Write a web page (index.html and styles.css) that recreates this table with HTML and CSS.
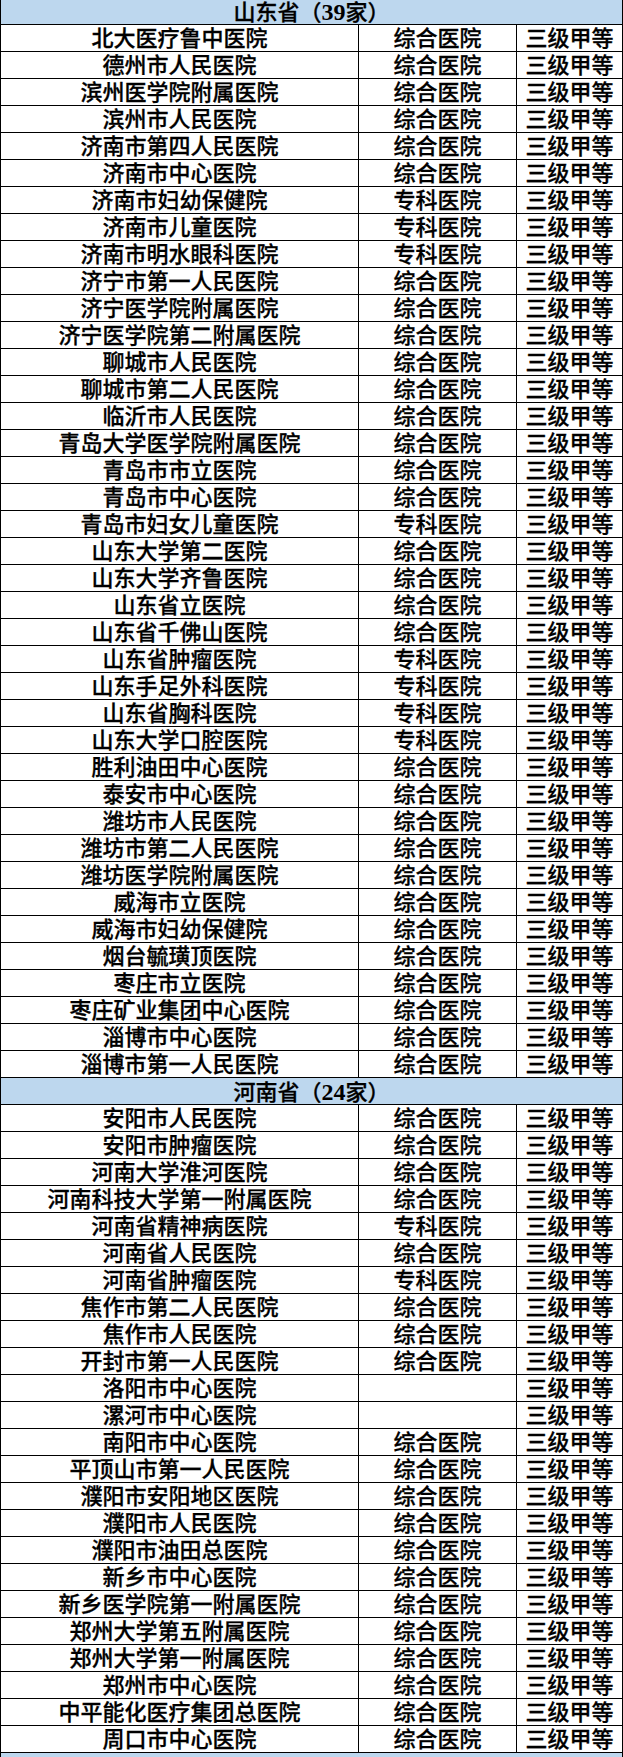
FILE: index.html
```html
<!DOCTYPE html>
<html lang="zh-CN">
<head>
<meta charset="utf-8">
<title>医院名单</title>
<link rel="stylesheet" href="styles.css">
</head>
<body>
<div class="sheet">
  <div class="group">山东省（<span class="num">39</span>家）</div>
  <div class="row"><div class="cell">北大医疗鲁中医院</div><div class="cell">综合医院</div><div class="cell">三级甲等</div></div>
  <div class="row"><div class="cell">德州市人民医院</div><div class="cell">综合医院</div><div class="cell">三级甲等</div></div>
  <div class="row"><div class="cell">滨州医学院附属医院</div><div class="cell">综合医院</div><div class="cell">三级甲等</div></div>
  <div class="row"><div class="cell">滨州市人民医院</div><div class="cell">综合医院</div><div class="cell">三级甲等</div></div>
  <div class="row"><div class="cell">济南市第四人民医院</div><div class="cell">综合医院</div><div class="cell">三级甲等</div></div>
  <div class="row"><div class="cell">济南市中心医院</div><div class="cell">综合医院</div><div class="cell">三级甲等</div></div>
  <div class="row"><div class="cell">济南市妇幼保健院</div><div class="cell">专科医院</div><div class="cell">三级甲等</div></div>
  <div class="row"><div class="cell">济南市儿童医院</div><div class="cell">专科医院</div><div class="cell">三级甲等</div></div>
  <div class="row"><div class="cell">济南市明水眼科医院</div><div class="cell">专科医院</div><div class="cell">三级甲等</div></div>
  <div class="row"><div class="cell">济宁市第一人民医院</div><div class="cell">综合医院</div><div class="cell">三级甲等</div></div>
  <div class="row"><div class="cell">济宁医学院附属医院</div><div class="cell">综合医院</div><div class="cell">三级甲等</div></div>
  <div class="row"><div class="cell">济宁医学院第二附属医院</div><div class="cell">综合医院</div><div class="cell">三级甲等</div></div>
  <div class="row"><div class="cell">聊城市人民医院</div><div class="cell">综合医院</div><div class="cell">三级甲等</div></div>
  <div class="row"><div class="cell">聊城市第二人民医院</div><div class="cell">综合医院</div><div class="cell">三级甲等</div></div>
  <div class="row"><div class="cell">临沂市人民医院</div><div class="cell">综合医院</div><div class="cell">三级甲等</div></div>
  <div class="row"><div class="cell">青岛大学医学院附属医院</div><div class="cell">综合医院</div><div class="cell">三级甲等</div></div>
  <div class="row"><div class="cell">青岛市市立医院</div><div class="cell">综合医院</div><div class="cell">三级甲等</div></div>
  <div class="row"><div class="cell">青岛市中心医院</div><div class="cell">综合医院</div><div class="cell">三级甲等</div></div>
  <div class="row"><div class="cell">青岛市妇女儿童医院</div><div class="cell">专科医院</div><div class="cell">三级甲等</div></div>
  <div class="row"><div class="cell">山东大学第二医院</div><div class="cell">综合医院</div><div class="cell">三级甲等</div></div>
  <div class="row"><div class="cell">山东大学齐鲁医院</div><div class="cell">综合医院</div><div class="cell">三级甲等</div></div>
  <div class="row"><div class="cell">山东省立医院</div><div class="cell">综合医院</div><div class="cell">三级甲等</div></div>
  <div class="row"><div class="cell">山东省千佛山医院</div><div class="cell">综合医院</div><div class="cell">三级甲等</div></div>
  <div class="row"><div class="cell">山东省肿瘤医院</div><div class="cell">专科医院</div><div class="cell">三级甲等</div></div>
  <div class="row"><div class="cell">山东手足外科医院</div><div class="cell">专科医院</div><div class="cell">三级甲等</div></div>
  <div class="row"><div class="cell">山东省胸科医院</div><div class="cell">专科医院</div><div class="cell">三级甲等</div></div>
  <div class="row"><div class="cell">山东大学口腔医院</div><div class="cell">专科医院</div><div class="cell">三级甲等</div></div>
  <div class="row"><div class="cell">胜利油田中心医院</div><div class="cell">综合医院</div><div class="cell">三级甲等</div></div>
  <div class="row"><div class="cell">泰安市中心医院</div><div class="cell">综合医院</div><div class="cell">三级甲等</div></div>
  <div class="row"><div class="cell">潍坊市人民医院</div><div class="cell">综合医院</div><div class="cell">三级甲等</div></div>
  <div class="row"><div class="cell">潍坊市第二人民医院</div><div class="cell">综合医院</div><div class="cell">三级甲等</div></div>
  <div class="row"><div class="cell">潍坊医学院附属医院</div><div class="cell">综合医院</div><div class="cell">三级甲等</div></div>
  <div class="row"><div class="cell">威海市立医院</div><div class="cell">综合医院</div><div class="cell">三级甲等</div></div>
  <div class="row"><div class="cell">威海市妇幼保健院</div><div class="cell">综合医院</div><div class="cell">三级甲等</div></div>
  <div class="row"><div class="cell">烟台毓璜顶医院</div><div class="cell">综合医院</div><div class="cell">三级甲等</div></div>
  <div class="row"><div class="cell">枣庄市立医院</div><div class="cell">综合医院</div><div class="cell">三级甲等</div></div>
  <div class="row"><div class="cell">枣庄矿业集团中心医院</div><div class="cell">综合医院</div><div class="cell">三级甲等</div></div>
  <div class="row"><div class="cell">淄博市中心医院</div><div class="cell">综合医院</div><div class="cell">三级甲等</div></div>
  <div class="row"><div class="cell">淄博市第一人民医院</div><div class="cell">综合医院</div><div class="cell">三级甲等</div></div>
  <div class="group">河南省（<span class="num">24</span>家）</div>
  <div class="row"><div class="cell">安阳市人民医院</div><div class="cell">综合医院</div><div class="cell">三级甲等</div></div>
  <div class="row"><div class="cell">安阳市肿瘤医院</div><div class="cell">综合医院</div><div class="cell">三级甲等</div></div>
  <div class="row"><div class="cell">河南大学淮河医院</div><div class="cell">综合医院</div><div class="cell">三级甲等</div></div>
  <div class="row"><div class="cell">河南科技大学第一附属医院</div><div class="cell">综合医院</div><div class="cell">三级甲等</div></div>
  <div class="row"><div class="cell">河南省精神病医院</div><div class="cell">专科医院</div><div class="cell">三级甲等</div></div>
  <div class="row"><div class="cell">河南省人民医院</div><div class="cell">综合医院</div><div class="cell">三级甲等</div></div>
  <div class="row"><div class="cell">河南省肿瘤医院</div><div class="cell">专科医院</div><div class="cell">三级甲等</div></div>
  <div class="row"><div class="cell">焦作市第二人民医院</div><div class="cell">综合医院</div><div class="cell">三级甲等</div></div>
  <div class="row"><div class="cell">焦作市人民医院</div><div class="cell">综合医院</div><div class="cell">三级甲等</div></div>
  <div class="row"><div class="cell">开封市第一人民医院</div><div class="cell">综合医院</div><div class="cell">三级甲等</div></div>
  <div class="row"><div class="cell">洛阳市中心医院</div><div class="cell"></div><div class="cell">三级甲等</div></div>
  <div class="row"><div class="cell">漯河市中心医院</div><div class="cell"></div><div class="cell">三级甲等</div></div>
  <div class="row"><div class="cell">南阳市中心医院</div><div class="cell">综合医院</div><div class="cell">三级甲等</div></div>
  <div class="row"><div class="cell">平顶山市第一人民医院</div><div class="cell">综合医院</div><div class="cell">三级甲等</div></div>
  <div class="row"><div class="cell">濮阳市安阳地区医院</div><div class="cell">综合医院</div><div class="cell">三级甲等</div></div>
  <div class="row"><div class="cell">濮阳市人民医院</div><div class="cell">综合医院</div><div class="cell">三级甲等</div></div>
  <div class="row"><div class="cell">濮阳市油田总医院</div><div class="cell">综合医院</div><div class="cell">三级甲等</div></div>
  <div class="row"><div class="cell">新乡市中心医院</div><div class="cell">综合医院</div><div class="cell">三级甲等</div></div>
  <div class="row"><div class="cell">新乡医学院第一附属医院</div><div class="cell">综合医院</div><div class="cell">三级甲等</div></div>
  <div class="row"><div class="cell">郑州大学第五附属医院</div><div class="cell">综合医院</div><div class="cell">三级甲等</div></div>
  <div class="row"><div class="cell">郑州大学第一附属医院</div><div class="cell">综合医院</div><div class="cell">三级甲等</div></div>
  <div class="row"><div class="cell">郑州市中心医院</div><div class="cell">综合医院</div><div class="cell">三级甲等</div></div>
  <div class="row"><div class="cell">中平能化医疗集团总医院</div><div class="cell">综合医院</div><div class="cell">三级甲等</div></div>
  <div class="row"><div class="cell">周口市中心医院</div><div class="cell">综合医院</div><div class="cell">三级甲等</div></div>
  <div class="group"></div>
</div>
</body>
</html>
```

FILE: styles.css
```css
html, body {
  margin: 0;
  padding: 0;
  background: #ffffff;
}

.sheet {
  width: 623px;
  margin-top: -2px;
  font-family: "Liberation Serif", "Noto Sans CJK SC", sans-serif;
  font-size: 22px;
  font-weight: 500;
  color: #000000;
  -webkit-text-stroke: 0.3px #000;
}

.group {
  box-sizing: border-box;
  height: 27px;
  padding-top: 2px;
  line-height: 24px;
  text-align: center;
  background: #bdd7ee;
  border-left: 1px solid #000;
  border-right: 1px solid #000;
  border-bottom: 1px solid #000;
}

.num {
  font-size: 24px;
  font-weight: 700;
  -webkit-text-stroke: 0;
}

.row {
  box-sizing: border-box;
  height: 27px;
  display: grid;
  grid-template-columns: 358px 158px 106px;
  border-right: 1px solid #000;
  border-bottom: 1px solid #000;
}

.cell {
  border-left: 1px solid #000;
  padding-top: 2px;
  line-height: 24px;
  text-align: center;
  white-space: nowrap;
  overflow: hidden;
}
```
